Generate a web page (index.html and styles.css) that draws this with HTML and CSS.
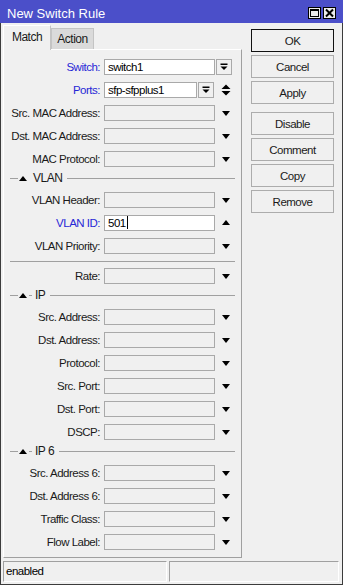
FILE: index.html
```html
<!DOCTYPE html>
<html lang="en">
<head>
  <meta charset="UTF-8" />
  <title>New Switch Rule</title>
  <link rel="stylesheet" href="styles.css">
</head>
<body>
  <div class="window">
    <div class="titlebar">
      <span class="title">New Switch Rule</span>
      <div class="tb-btns">
        <span class="tb-btn"><svg width="11" height="10" viewBox="0 0 11 10"><rect x="1.5" y="1.5" width="8" height="7" fill="none" stroke="#000"/><rect x="1" y="1" width="9" height="2" fill="#000"/></svg></span>
        <span class="tb-btn"><svg width="11" height="10" viewBox="0 0 11 10"><path d="M2 1.5 L9 8.5 M9 1.5 L2 8.5" stroke="#000" stroke-width="2"/></svg></span>
      </div>
    </div>

    <div class="body">
      <div class="main">
        <div class="tabs">
          <div class="tab active">Match</div>
          <div class="tab">Action</div>
        </div>

        <div class="panel">
          <div class="row">
            <label class="lbl blue">Switch:</label>
            <div class="field filled">switch1</div>
            <span class="dd-btn"><svg width="14" height="14" viewBox="0 0 14 14"><rect x="3.5" y="3.5" width="7" height="1.5" fill="#000"/><path d="M3.5 6.5 H10.5 L7 10 Z" fill="#000"/></svg></span>
          </div>
          <div class="row">
            <label class="lbl blue">Ports:</label>
            <div class="field filled short">sfp-sfpplus1</div>
            <span class="dd-btn"><svg width="14" height="14" viewBox="0 0 14 14"><rect x="3.5" y="3.5" width="7" height="1.5" fill="#000"/><path d="M3.5 6.5 H10.5 L7 10 Z" fill="#000"/></svg></span>
            <span class="updown"><svg width="10" height="14" viewBox="0 0 10 14"><path d="M0.5 6 L5 1.5 L9.5 6 Z M0.5 8 H9.5 L5 12.5 Z" fill="#000"/></svg></span>
          </div>
          <div class="row">
            <label class="lbl">Src. MAC Address:</label>
            <div class="field"></div>
            <span class="arrow down"></span>
          </div>
          <div class="row">
            <label class="lbl">Dst. MAC Address:</label>
            <div class="field"></div>
            <span class="arrow down"></span>
          </div>
          <div class="row">
            <label class="lbl">MAC Protocol:</label>
            <div class="field"></div>
            <span class="arrow down"></span>
          </div>

          <div class="section">
            <span class="sec-line lead"></span>
            <span class="sec-tri"></span>
            <span class="sec-name">VLAN</span>
            <span class="sec-line rest"></span>
          </div>
          <div class="row">
            <label class="lbl">VLAN Header:</label>
            <div class="field"></div>
            <span class="arrow down"></span>
          </div>
          <div class="row">
            <label class="lbl blue">VLAN ID:</label>
            <div class="field filled">501<span class="caret"></span></div>
            <span class="arrow up"></span>
          </div>
          <div class="row">
            <label class="lbl">VLAN Priority:</label>
            <div class="field"></div>
            <span class="arrow down"></span>
          </div>

          <div class="separator"></div>
          <div class="row">
            <label class="lbl">Rate:</label>
            <div class="field"></div>
            <span class="arrow down"></span>
          </div>

          <div class="section">
            <span class="sec-line lead"></span>
            <span class="sec-tri"></span>
            <span class="sec-dash"></span>
            <span class="sec-name">IP</span>
            <span class="sec-line rest"></span>
          </div>
          <div class="row">
            <label class="lbl">Src. Address:</label>
            <div class="field"></div>
            <span class="arrow down"></span>
          </div>
          <div class="row">
            <label class="lbl">Dst. Address:</label>
            <div class="field"></div>
            <span class="arrow down"></span>
          </div>
          <div class="row">
            <label class="lbl">Protocol:</label>
            <div class="field"></div>
            <span class="arrow down"></span>
          </div>
          <div class="row">
            <label class="lbl">Src. Port:</label>
            <div class="field"></div>
            <span class="arrow down"></span>
          </div>
          <div class="row">
            <label class="lbl">Dst. Port:</label>
            <div class="field"></div>
            <span class="arrow down"></span>
          </div>
          <div class="row">
            <label class="lbl">DSCP:</label>
            <div class="field"></div>
            <span class="arrow down"></span>
          </div>

          <div class="section">
            <span class="sec-line lead"></span>
            <span class="sec-tri"></span>
            <span class="sec-dash"></span>
            <span class="sec-name">IP 6</span>
            <span class="sec-line rest"></span>
          </div>
          <div class="row">
            <label class="lbl">Src. Address 6:</label>
            <div class="field"></div>
            <span class="arrow down"></span>
          </div>
          <div class="row">
            <label class="lbl">Dst. Address 6:</label>
            <div class="field"></div>
            <span class="arrow down"></span>
          </div>
          <div class="row">
            <label class="lbl">Traffic Class:</label>
            <div class="field"></div>
            <span class="arrow down"></span>
          </div>
          <div class="row">
            <label class="lbl">Flow Label:</label>
            <div class="field"></div>
            <span class="arrow down"></span>
          </div>
        </div>
      </div>

      <div class="actions">
        <button class="btn default">OK</button>
        <button class="btn">Cancel</button>
        <button class="btn">Apply</button>
        <button class="btn group">Disable</button>
        <button class="btn">Comment</button>
        <button class="btn">Copy</button>
        <button class="btn">Remove</button>
      </div>
    </div>

    <div class="statusbar">
      <div class="status first">enabled</div>
      <div class="status second"></div>
    </div>
  </div>
</body>
</html>
```

FILE: styles.css
```css
* { box-sizing: border-box; margin: 0; padding: 0; }
body {
  font-family: "Liberation Sans", Arial, sans-serif;
  font-size: 11.5px;
  letter-spacing: -0.5px;
  color: #1a1a1a;
  background: #f0f0f0;
}
.window {
  width: 343px;
  height: 585px;
  border: 1px solid #3c3c3c;
  border-top: 0;
  background: #f0f0f0;
  display: flex;
  flex-direction: column;
}
.titlebar {
  height: 23px;
  margin: 0 -1px;
  padding: 3px 7px 0 7px;
  background: #4b4fc9;
  color: #fff;
  display: flex;
  align-items: center;
  flex-shrink: 0;
}
.title { flex: 1; font-size: 13px; letter-spacing: 0; }
.tb-btns { display: flex; gap: 2px; }
.tb-btn {
  width: 13px;
  height: 12px;
  border: 1px solid #000;
  background: #ececec;
  display: flex;
  align-items: center;
  justify-content: center;
}
.body {
  display: flex;
  gap: 9px;
  padding: 0 8px 0 2px;
}
.main { width: 239px; }
.tabs {
  height: 26px;
  display: flex;
  align-items: flex-end;
}
.tab {
  height: 21px;
  width: 43px;
  background: #dadada;
  border: 1px solid #c4c4c4;
  border-bottom: 0;
  text-align: center;
  line-height: 20px;
  font-size: 12px;
}
.tab.active {
  height: 25px;
  width: 48px;
  margin-bottom: -1px;
  background: #f0f0f0;
  border-color: #fff #c4c4c4 #fff #fff;
  position: relative;
  z-index: 1;
  line-height: 22px;
}
.panel {
  height: 509px;
  border: 1px solid;
  border-color: #fff #a0a0a0 #a0a0a0 #fff;
  padding-top: 9px;
}
.row {
  height: 23px;
  display: flex;
  align-items: flex-start;
}
.lbl {
  width: 96px;
  text-align: right;
  line-height: 16px;
  white-space: nowrap;
}
.lbl.blue { color: #2727d6; }
.field {
  width: 111px;
  height: 16px;
  margin-left: 4px;
  border: 1px solid #a9a9a9;
  background: #f0f0f0;
  line-height: 14px;
  padding-left: 3px;
  color: #000;
  white-space: nowrap;
}
.field.filled { background: #fff; }
.field.short { width: 93px; }
.caret {
  display: inline-block;
  width: 1px;
  height: 13px;
  background: #000;
  vertical-align: -2px;
  margin-left: 1px;
}
.dd-btn {
  width: 16px;
  height: 16px;
  margin-left: 1px;
  border: 1px solid #a9a9a9;
  background: #f0f0f0;
  display: flex;
  align-items: center;
  justify-content: center;
}
.updown {
  margin-left: 7px;
  height: 16px;
  display: flex;
  align-items: center;
}
.arrow {
  width: 0;
  height: 0;
  margin-left: 7px;
  margin-top: 6px;
  border-left: 4.5px solid transparent;
  border-right: 4.5px solid transparent;
}
.arrow.down { border-top: 5px solid #000; }
.arrow.up { border-bottom: 5px solid #000; margin-top: 5px; }
.section {
  height: 18px;
  display: flex;
  align-items: center;
  padding: 0 6px 6px 6px;
  margin-top: -2px;
  margin-bottom: 2px;
}
.sec-line { height: 1px; background: #a0a0a0; }
.sec-line.lead { width: 8px; }
.sec-line.rest { flex: 1; margin-left: 5px; }
.sec-tri {
  width: 0;
  height: 0;
  margin-left: 1px;
  border-left: 4.5px solid transparent;
  border-right: 4.5px solid transparent;
  border-bottom: 5px solid #000;
}
.sec-dash { width: 3px; height: 1px; background: #a0a0a0; margin-left: 2px; }
.sec-name { margin-left: 6px; line-height: 12px; font-size: 12px; }
.sec-dash + .sec-name { margin-left: 3px; }
.separator {
  height: 7px;
  margin: 0 6px;
  border-top: 1px solid #a0a0a0;
}
.actions {
  width: 83px;
  padding-top: 6px;
  display: flex;
  flex-direction: column;
  gap: 3px;
}
.btn {
  height: 23px;
  width: 83px;
  border: 1px solid #acacac;
  background: #f0f0f0;
  font-family: inherit;
  font-size: 11.5px;
  letter-spacing: -0.5px;
  color: #1a1a1a;
}
.btn.default { border-color: #111; }
.btn.group { margin-top: 5px; }
.statusbar {
  display: flex;
  gap: 2px;
  padding: 3px 3px 0 2px;
}
.status {
  height: 21px;
  border: 1px solid;
  border-color: #a0a0a0 #fff #fff #a0a0a0;
  line-height: 19px;
  padding-left: 2px;
  color: #000;
}
.status.first { width: 164px; }
.status.second { flex: 1; }
```
